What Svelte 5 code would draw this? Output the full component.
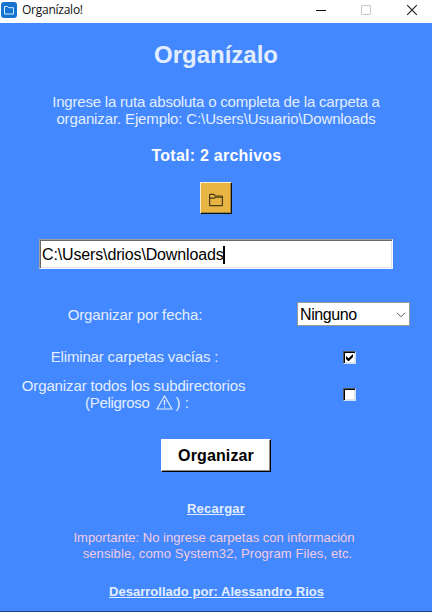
<script>
  let path = $state('C:\\Users\\drios\\Downloads');
  let removeEmpty = $state(true);
  let subdirs = $state(false);
</script>

<div class="window">
  <header>
    <svg class="appicon" width="16" height="16" viewBox="0 0 16 16">
      <rect width="16" height="16" rx="3" fill="#1674cf" />
      <path d="M3.5 4.5h3l1.2 1.2h4.8v6.3h-9z" fill="none" stroke="#d5ecff" />
    </svg>
    <span class="name">Organízalo!</span>
    <svg class="controls" width="120" height="23" viewBox="0 0 120 23">
      <path d="M4 10.5h10" stroke="#111" fill="none" />
      <rect x="49.5" y="5.5" width="9" height="9" rx=".5" stroke="#c6c6c6" fill="none" />
      <path d="M95.2 5.2l9.6 9.6M104.8 5.2l-9.6 9.6" stroke="#222" stroke-width="1.2" fill="none" />
    </svg>
  </header>

  <main>
    <h1>Organízalo</h1>
    <p class="intro">
      <span class="i1">Ingrese la ruta absoluta o completa de la carpeta a</span><br />
      <span class="i2">organizar. Ejemplo: C:\Users\Usuario\Downloads</span>
    </p>
    <p class="total">Total: 2 archivos</p>
    <button class="browse" aria-label="Carpeta">
      <svg width="16" height="16" viewBox="0 0 16 16" fill="none" stroke="#4a3a14" stroke-width="1.2">
        <path d="M1.6 13.4V3.2q0-.8.8-.8h3.4l1.6 1.6h6.2q.8 0 .8.8v8.2q0 .6-.6.6H2.2q-.6 0-.6-.6z" />
        <path d="M1.6 6.2h4.6l1.4-1h6.8" />
      </svg>
    </button>
    <div class="entry"><span>{path}</span><i class="caret"></i></div>

    <div class="row date">
      <div class="label"><span class="l1">Organizar por fecha:</span></div>
      <div class="field">
        <div class="combo">
          <span>Ninguno</span>
          <svg width="10" height="6" viewBox="0 0 10 6"><path d="M1 .8l4 4 4-4" fill="none" stroke="#555" /></svg>
        </div>
      </div>
    </div>
    <div class="row empty">
      <div class="label"><span class="l2">Eliminar carpetas vacías :</span></div>
      <div class="field">
        <button class="check" aria-label="Eliminar carpetas vacías" onclick={() => (removeEmpty = !removeEmpty)}>
          {#if removeEmpty}<svg width="9" height="9" viewBox="0 0 9 9"><path d="M1 3v3l2 2h1l4-4V1L3.5 5.2z" fill="#000" /></svg>{/if}
        </button>
      </div>
    </div>
    <div class="row sub">
      <div class="label">
        <span class="l3">Organizar todos los subdirectorios</span>
        <div class="danger">
          <span class="word">(Peligroso</span>
          <svg width="17" height="15" viewBox="0 0 17 15" fill="none" stroke="#e2eeff" stroke-linejoin="round">
            <path d="M8.5 1L16 14H1z" stroke-width="1.2" />
            <path d="M8.5 5v5M8.5 11.3v1.2" stroke-width="1.3" />
          </svg>
          <span>) :</span>
        </div>
      </div>
      <div class="field">
        <button class="check" aria-label="Organizar subdirectorios" onclick={() => (subdirs = !subdirs)}>
          {#if subdirs}<svg width="9" height="9" viewBox="0 0 9 9"><path d="M1 3v3l2 2h1l4-4V1L3.5 5.2z" fill="#000" /></svg>{/if}
        </button>
      </div>
    </div>

    <button class="go">Organizar</button>
    <div class="link reload">Recargar</div>
    <p class="warn">
      <span class="w1">Importante: No ingrese carpetas con información</span><br />
      <span class="w2">sensible, como System32, Program Files, etc.</span>
    </p>
    <div class="link author">Desarrollado por: Alessandro Rios</div>
  </main>
</div>

<style>
  .window {
    box-sizing: border-box;
    width: 432px;
    height: 612px;
    overflow: hidden;
    display: flex;
    flex-direction: column;
    background: #4488ff;
    border-bottom: 1px solid #1d4179;
    font-family: "Liberation Sans", Arial, sans-serif;
    color: #e2eeff;
  }
  header {
    height: 23px;
    flex: none;
    display: flex;
    background: #fff;
    color: #111;
  }
  .appicon { margin: 2px 0 0 1px; }
  .name {
    margin-left: 5px;
    font: 12px/20px "Open Sans", "Noto Sans", sans-serif;
    letter-spacing: -0.25px;
  }
  .controls { margin-left: auto; margin-right: 0; }
  main {
    display: flex;
    flex-direction: column;
    align-items: center;
    white-space: nowrap;
  }
  h1, p { margin: 0; font-weight: normal; }
  button { padding: 0; font-family: inherit; border-radius: 0; }
  h1 { margin-top: 18px; font: bold 24px/28px "Liberation Sans", Arial, sans-serif; }
  .intro { margin-top: 24px; font-size: 15px; line-height: 17px; text-align: center; }
  .i1 { letter-spacing: -0.2px; }
  .i2 { letter-spacing: -0.13px; }
  .total { margin-top: 20px; font-weight: bold; font-size: 16px; line-height: 18px; color: #fff; letter-spacing: 0.24px; padding-left: 1px; }
  .browse {
    margin-top: 17px;
    width: 32px;
    height: 32px;
    box-sizing: border-box;
    display: flex;
    align-items: center;
    justify-content: center;
    background: #e8b542;
    border: 1px solid;
    border-color: #fbeecb #111 #111 #fbeecb;
    box-shadow: inset -1px -1px #a08040;
  }
  .browse svg { margin-top: 4px; }
  .entry {
    margin-top: 25px;
    width: 354px;
    height: 30px;
    box-sizing: border-box;
    display: flex;
    align-items: center;
    background: #fff;
    border: 1px solid;
    border-color: #a0a0a0 #f4f8ff #f4f8ff #a0a0a0;
    box-shadow: inset 1px 1px #696969, inset -1px -1px #e3e3e3;
    padding: 1px 0 0 2px;
    color: #000;
    font-size: 16px;
    letter-spacing: -0.14px;
  }
  .caret { width: 2px; height: 18px; background: #000; margin-left: -1px; }
  .row { display: flex; width: 432px; align-items: center; }
  .label { width: 266px; text-align: center; font-size: 15px; line-height: 17px; }
  .l1 { letter-spacing: -0.1px; padding-left: 4px; }
  .l2 { letter-spacing: -0.16px; padding-left: 3px; }
  .l3 { letter-spacing: -0.12px; padding-left: 1px; }
  .field { width: 166px; display: flex; justify-content: center; }
  .date { margin-top: 33px; height: 24px; }
  .combo {
    width: 113px;
    height: 24px;
    box-sizing: border-box;
    margin-left: 9px;
    border: 1px solid #9a9a9a;
    background: #fff;
    color: #000;
    font-size: 16px;
    letter-spacing: -0.4px;
    display: flex;
    align-items: center;
    justify-content: space-between;
    padding: 1px 3px 0 2px;
  }
  .empty { margin-top: 19px; height: 23px; }
  .empty .check { margin-top: 1px; }
  .sub { margin-top: 9px; height: 34px; }
  .check {
    width: 13px;
    height: 13px;
    box-sizing: border-box;
    display: flex;
    background: #fff;
    border: 1px solid;
    border-color: #555 #cfe2ff #cfe2ff #555;
    box-shadow: inset 1px 1px #000, inset -1px -1px #e3e3e3;
    padding: 1px;
  }
  .danger { display: flex; justify-content: center; padding-left: 8px; }
  .word { letter-spacing: -0.3px; }
  .danger svg { margin: 1px 3px 0 6px; }
  .go {
    margin-top: 28px;
    width: 110px;
    height: 33px;
    box-sizing: border-box;
    background: #fff;
    border: 1px solid;
    border-color: #fff #000 #000 #fff;
    box-shadow: inset -1px -1px #888;
    font-size: 16px;
    letter-spacing: 0.12px;
    font-weight: bold;
    color: #000;
  }
  .link {
    font-size: 13px;
    line-height: 16px;
    font-weight: bold;
    text-decoration: underline;
  }
  .reload { margin-top: 29px; letter-spacing: 0.2px; }
  .warn { margin-top: 13px; font-size: 13px; line-height: 16px; text-align: center; color: #f3cbe0; }
  .w1 { padding-right: 4px; }
  .w2 { letter-spacing: 0.12px; padding-left: 3px; }
  .author { margin-top: 22px; padding-left: 1px; letter-spacing: 0.03px; }
</style>
